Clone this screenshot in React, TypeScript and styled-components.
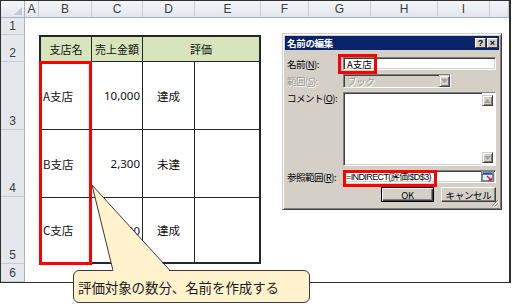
import React from "react";
import styled, { createGlobalStyle } from "styled-components";

const Global = createGlobalStyle`
  html, body { margin: 0; padding: 0; background: #fff; }
  body { overflow: hidden; }
`;

const Page = styled.div`
  position: relative;
  width: 512px;
  height: 304px;
  overflow: hidden;
  background: #fff;
  font-family: "Noto Sans CJK JP", "Noto Sans", sans-serif;
`;

const Frame = styled.div`
  width: 511px;
  height: 283px;
  box-sizing: border-box;
  border: 1px solid #2e2e2e;
  border-right-width: 2px;
`;

const Sheet = styled.div`
  display: grid;
  grid-template-columns: 24px 14px 53px 51px 52px 66px 48px 62px 67px 52px 1fr;
  grid-template-rows: 17px 17px 27px 68px 67px 67px 1fr;
  height: 100%;
  background: #fff;
`;

const Corner = styled.div`
  position: relative;
  background: linear-gradient(#f4f6f9, #e2e6eb);
  border-right: 1px solid #a9b1bc;
  border-bottom: 1px solid #a9b1bc;
  &::after {
    content: "";
    position: absolute;
    right: 2px;
    bottom: 2px;
    border-style: solid;
    border-width: 0 0 8px 8px;
    border-color: transparent transparent #c3c8cf transparent;
  }
`;

const ColHead = styled.div`
  display: flex;
  align-items: center;
  justify-content: center;
  background: linear-gradient(#f4f6f9, #e2e6eb);
  border-right: 1px solid #c6ccd4;
  border-bottom: 1px solid #a9b1bc;
  font-family: "Liberation Sans", Arial, sans-serif;
  font-size: 12px;
  color: #3c3c3c;
`;

const RowHead = styled.div<{ $row: number }>`
  grid-column: 1;
  grid-row: ${(p) => p.$row};
  display: flex;
  align-items: flex-end;
  justify-content: center;
  padding-bottom: 1px;
  box-sizing: border-box;
  background: #e4e8ed;
  border-bottom: 1px solid #c6ccd4;
  border-right: 1px solid #a9b1bc;
  font-family: "Liberation Sans", Arial, sans-serif;
  font-size: 12px;
  color: #3c3c3c;
`;

const Table = styled.div`
  grid-column: 3 / 7;
  grid-row: 3 / 7;
  display: grid;
  grid-template-columns: 50px 50px 51px 1fr;
  grid-template-rows: 24px 67px 67px 1fr;
  gap: 1px;
  background: #262626;
  border: 2px solid #262626;
`;

const HeadCell = styled.div<{ $span?: number }>`
  grid-column: span ${(p) => p.$span ?? 1};
  display: flex;
  align-items: center;
  justify-content: center;
  background: #d8e4bc;
  font-size: 11px;
  color: #111;
`;

const Cell = styled.div<{ $align?: "left" | "right" | "center" }>`
  display: flex;
  align-items: center;
  justify-content: ${(p) =>
    p.$align === "right" ? "flex-end" : p.$align === "center" ? "center" : "flex-start"};
  padding: 0 2px 0 2px;
  background: #fff;
  font-size: 11.5px;
  color: #111;
`;

const Num = styled.span`
  font-family: "Noto Sans", sans-serif;
  font-size: 11.5px;
`;

/* Dialog */
const Dialog = styled.div`
  position: absolute;
  left: 282px;
  top: 33px;
  width: 220px;
  height: 177px;
  box-sizing: border-box;
  padding: 2px;
  background: #d4d0c8;
  border: 1px solid;
  border-color: #d4d0c8 #404040 #404040 #d4d0c8;
  box-shadow: inset 1px 1px 0 #fff, inset -1px -1px 0 #808080;
  display: flex;
  flex-direction: column;
`;

const TitleBar = styled.div`
  height: 14px;
  display: flex;
  align-items: center;
  padding: 0 1px 0 2px;
  background: #0a246a;
  color: #fff;
  font-weight: bold;
  font-size: 9.5px;
  letter-spacing: -0.3px;
`;

const TitleText = styled.span`
  flex: 1;
`;

const TitleBtn = styled.div`
  width: 11px;
  height: 10px;
  margin-left: 1px;
  box-sizing: border-box;
  background: #d4d0c8;
  border: 1px solid;
  border-color: #fff #404040 #404040 #fff;
  color: #000;
  font-family: "Liberation Sans", Arial, sans-serif;
  font-weight: bold;
  font-size: 9px;
  line-height: 8px;
  text-align: center;
  letter-spacing: 0;
`;

const Body = styled.div`
  flex: 1;
  display: grid;
  grid-template-columns: 56px 1fr;
  grid-template-rows: 13px 14px 74px 13px 15px;
  row-gap: 4px;
  padding: 7px 3px 0 2px;
`;

const Label = styled.div<{ $disabled?: boolean; $top?: boolean }>`
  align-self: ${(p) => (p.$top ? "start" : "center")};
  font-size: 9.5px;
  letter-spacing: -0.5px;
  line-height: 12px;
  white-space: nowrap;
  color: ${(p) => (p.$disabled ? "#9a978f" : "#000")};
  text-shadow: ${(p) => (p.$disabled ? "1px 1px 0 #fff" : "none")};
  u { text-decoration: underline; }
`;

const Sunken = styled.div<{ $bg?: string; $width?: number }>`
  position: relative;
  box-sizing: border-box;
  width: ${(p) => (p.$width ? `${p.$width}px` : "auto")};
  background: ${(p) => p.$bg ?? "#fff"};
  border: 1px solid;
  border-color: #808080 #fff #fff #808080;
  box-shadow: inset 1px 1px 0 #404040, inset -1px -1px 0 #d4d0c8;
  display: flex;
  align-items: center;
  padding-left: 3px;
  font-size: 9.5px;
  color: #000;
  overflow: hidden;
`;

const GreyText = styled.span`
  flex: 1;
  color: #9a978f;
  text-shadow: 1px 1px 0 #fff;
  letter-spacing: -0.3px;
`;

const Raised = styled.div<{ $w: number; $h: number }>`
  width: ${(p) => p.$w}px;
  height: ${(p) => p.$h}px;
  box-sizing: border-box;
  background: #d4d0c8;
  border: 1px solid;
  border-color: #d4d0c8 #404040 #404040 #d4d0c8;
  box-shadow: inset 1px 1px 0 #fff, inset -1px -1px 0 #808080;
  display: flex;
  align-items: center;
  justify-content: center;
  flex-shrink: 0;
`;

const Scroll = styled.div`
  width: 12px;
  align-self: stretch;
  margin-left: auto;
  padding: 2px 1px 2px 0;
  display: flex;
  flex-direction: column;
  justify-content: space-between;
  background: #fff;
`;

const FormulaText = styled.span`
  flex: 1;
  font-family: "Liberation Sans", "Noto Sans CJK JP", sans-serif;
  font-size: 9px;
  letter-spacing: -0.6px;
  white-space: nowrap;
  margin-left: -1px;
`;

const ButtonRow = styled.div`
  grid-column: 1 / 3;
  display: flex;
  justify-content: flex-end;
  gap: 7px;
  padding-right: 0;
`;

const PushButton = styled.div<{ $w: number; $default?: boolean }>`
  width: ${(p) => p.$w}px;
  height: 15px;
  box-sizing: border-box;
  background: #d4d0c8;
  border: 1px solid;
  border-color: ${(p) => (p.$default ? "#000" : "#fff #404040 #404040 #fff")};
  box-shadow: ${(p) =>
    p.$default
      ? "inset 1px 1px 0 #fff, inset -1px -1px 0 #404040, inset -2px -2px 0 #808080"
      : "inset -1px -1px 0 #808080"};
  display: flex;
  align-items: center;
  justify-content: center;
  font-size: 9.5px;
  letter-spacing: -0.3px;
  color: #000;
`;

const Grip = styled.svg`
  position: absolute;
  right: 2px;
  bottom: 2px;
`;

/* overlays */
const RedBox = styled.div<{ $x: number; $y: number; $w: number; $h: number }>`
  position: absolute;
  left: ${(p) => p.$x}px;
  top: ${(p) => p.$y}px;
  width: ${(p) => p.$w}px;
  height: ${(p) => p.$h}px;
  box-sizing: border-box;
  border: 3px solid #ff0000;
  pointer-events: none;
`;

const CalloutBox = styled.div`
  position: absolute;
  left: 73px;
  top: 270px;
  width: 237px;
  height: 33px;
  box-sizing: border-box;
  border: 1px solid #3a3a3a;
  border-radius: 6px;
  background: #fff2cc;
  display: flex;
  align-items: center;
  padding-left: 4px;
  font-size: 13.5px;
  color: #1a1a1a;
  letter-spacing: -0.1px;
`;

const Pointer = styled.svg`
  position: absolute;
  left: 88px;
  top: 182px;
`;

const Arrow = ({ up }: { up?: boolean }) => (
  <svg width="7" height="4" viewBox="0 0 7 4">
    <polygon points={up ? "3.5,0 7,4 0,4" : "0,0 7,0 3.5,4"} fill="#a0a0a0" />
  </svg>
);

const cols = ["A", "B", "C", "D", "E", "F", "G", "H", "I", ""];
const rows = ["1", "2", "3", "4", "5", "6"];

export default function App() {
  return (
    <Page>
      <Global />
      <Frame>
        <Sheet>
          <Corner />
          {cols.map((c, i) => (
            <ColHead key={i}>{c}</ColHead>
          ))}
          {rows.map((r, i) => (
            <RowHead key={r} $row={i + 2}>
              {r}
            </RowHead>
          ))}
          <Table>
            <HeadCell>支店名</HeadCell>
            <HeadCell>売上金額</HeadCell>
            <HeadCell $span={2}>評価</HeadCell>

            <Cell>A支店</Cell>
            <Cell $align="right"><Num>10,000</Num></Cell>
            <Cell $align="center">達成</Cell>
            <Cell />

            <Cell>B支店</Cell>
            <Cell $align="right"><Num>2,300</Num></Cell>
            <Cell $align="center">未達</Cell>
            <Cell />

            <Cell>C支店</Cell>
            <Cell $align="right"><Num>8,000</Num></Cell>
            <Cell $align="center">達成</Cell>
            <Cell />
          </Table>
        </Sheet>
      </Frame>

      <Dialog>
        <TitleBar>
          <TitleText>名前の編集</TitleText>
          <TitleBtn>?</TitleBtn>
          <TitleBtn>×</TitleBtn>
        </TitleBar>
        <Body>
          <Label>
            名前(<u>N</u>):
          </Label>
          <Sunken>A支店</Sunken>

          <Label $disabled>
            範囲(<u>S</u>):
          </Label>
          <Sunken $bg="#d4d0c8" $width={108}>
            <GreyText>ブック</GreyText>
            <Raised $w={11} $h={12}>
              <Arrow />
            </Raised>
          </Sunken>

          <Label $top>
            コメント(<u>O</u>):
          </Label>
          <Sunken>
            <Scroll>
              <Raised $w={11} $h={11}>
                <Arrow up />
              </Raised>
              <Raised $w={11} $h={11}>
                <Arrow />
              </Raised>
            </Scroll>
          </Sunken>

          <Label>
            参照範囲(<u>R</u>):
          </Label>
          <Sunken>
            <FormulaText>=INDIRECT(評価!$D$3)</FormulaText>
            <svg width="13" height="11" viewBox="0 0 13 11" style={{ marginRight: 1 }}>
              <rect x="0.5" y="0.5" width="12" height="10" fill="#d4d0c8" stroke="#808080" />
              <rect x="1.5" y="1.5" width="10" height="2" fill="#1f4aa8" />
              <rect x="1.5" y="3.5" width="10" height="6" fill="#e8eef8" stroke="#1f4aa8" strokeWidth="0.6" />
              <path d="M6 5 L10 9" stroke="#e01818" strokeWidth="1.4" />
              <path d="M7.5 9.2 L10.2 9.2 L10.2 6.5" stroke="#e01818" strokeWidth="1.2" fill="none" />
            </svg>
          </Sunken>

          <ButtonRow>
            <PushButton $w={53} $default>OK</PushButton>
            <PushButton $w={55}>キャンセル</PushButton>
          </ButtonRow>
        </Body>
        <Grip width="9" height="9" viewBox="0 0 9 9">
          <path d="M8 2 L2 8 M8 5 L5 8" stroke="#808080" strokeWidth="1" />
          <path d="M9 3 L3 9 M9 6 L6 9" stroke="#fff" strokeWidth="1" />
        </Grip>
      </Dialog>

      <RedBox $x={39} $y={61} $w={53} $h={204} />
      <RedBox $x={338} $y={54} $w={39} $h={20} />
      <RedBox $x={343} $y={170} $w={94} $h={17} />

      <CalloutBox>評価対象の数分、名前を作成する</CalloutBox>
      <Pointer width="90" height="92" viewBox="0 0 90 92">
        <polygon points="4,3 25,89.5 82,89.5" fill="#fff2cc" />
        <path d="M4 3 L25 88.5 M4 3 L82 88.5" stroke="#3a3a3a" strokeWidth="1" fill="none" />
      </Pointer>
    </Page>
  );
}
